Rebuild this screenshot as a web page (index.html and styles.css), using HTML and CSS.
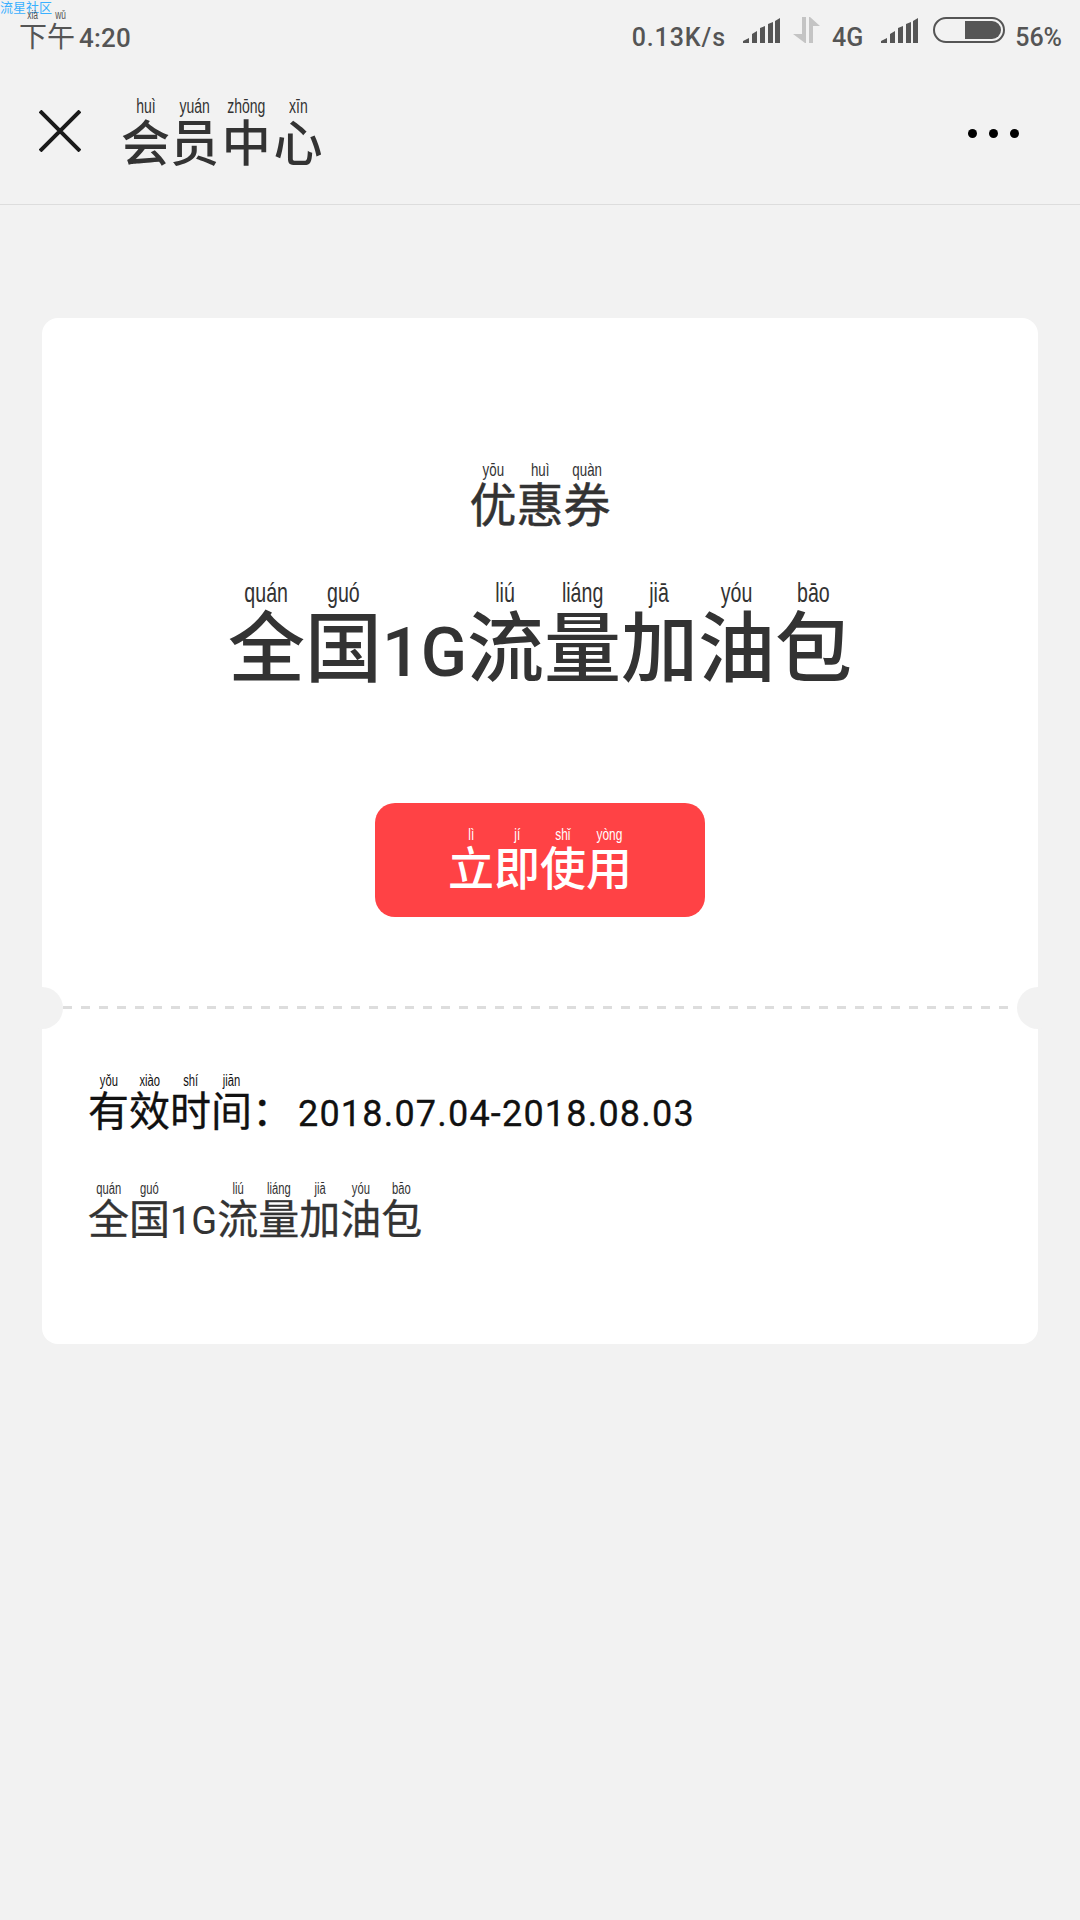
FILE: index.html
```html
<!DOCTYPE html>
<html lang="zh-CN">
<head>
    <meta charset="UTF-8">
    <meta name="viewport" content="width=device-width, initial-scale=1.0">
    <title>会员中心</title>
    <link rel="stylesheet" href="styles.css">
</head>
<body>
    <div class="watermark">流星社区</div>
    <div class="status-bar">
        <div class="time"><ruby>下<rt><span class="py">xià</span></rt></ruby><ruby>午<rt><span class="py">wǔ</span></rt></ruby><span class="time-num">4:20</span></div>
        <div class="status-right">
            <span class="speed">0.13K/s</span>
            <svg class="signal" width="37" height="25" viewBox="0 0 37 25"><path d="M0 25v-2l6-3v5zM9 25V16l5-3v12zM17 25V10l5-2v17zM25 25V6l5-2v21zM32 25V3l5-3v25z" fill="#555"/></svg>
            <svg class="arrows" width="27" height="27" viewBox="0 0 27 27"><path d="M9 0h4v26h-1L0 17h9zM16 0h1l10 9h-7v17h-4z" fill="#c4c4c4"/></svg>
            <span class="net">4G</span>
            <svg class="signal" width="37" height="25" viewBox="0 0 37 25"><path d="M0 25v-2l6-3v5zM9 25V16l5-3v12zM17 25V10l5-2v17zM25 25V6l5-2v21zM32 25V3l5-3v25z" fill="#555"/></svg>
            <div class="battery"><div class="battery-fill"></div></div>
            <span class="percent">56%</span>
        </div>
    </div>
    <div class="nav-bar">
        <svg class="close" width="42" height="42" viewBox="0 0 42 42"><path d="M1 1l40 40M41 1L1 41" stroke="#1a1a1a" stroke-width="4" fill="none"/></svg>
        <h1 class="nav-title"><ruby>会<rt><span class="py">huì</span></rt></ruby><ruby>员<rt><span class="py">yuán</span></rt></ruby><ruby>中<rt><span class="py">zhōng</span></rt></ruby><ruby>心<rt><span class="py">xīn</span></rt></ruby></h1>
        <div class="more"><i></i><i></i><i></i></div>
    </div>

    <div class="card">
        <div class="card-top">
            <div class="coupon-label"><ruby>优<rt><span class="py">yōu</span></rt></ruby><ruby>惠<rt><span class="py">huì</span></rt></ruby><ruby>券<rt><span class="py">quàn</span></rt></ruby></div>
            <div class="coupon-name"><ruby>全<rt><span class="py">quán</span></rt></ruby><ruby>国<rt><span class="py">guó</span></rt></ruby><span class="latin">1G</span><ruby>流<rt><span class="py">liú</span></rt></ruby><ruby>量<rt><span class="py">liáng</span></rt></ruby><ruby>加<rt><span class="py">jiā</span></rt></ruby><ruby>油<rt><span class="py">yóu</span></rt></ruby><ruby>包<rt><span class="py">bāo</span></rt></ruby></div>
            <button type="button" class="btn"><ruby>立<rt><span class="py">lì</span></rt></ruby><ruby>即<rt><span class="py">jí</span></rt></ruby><ruby>使<rt><span class="py">shǐ</span></rt></ruby><ruby>用<rt><span class="py">yòng</span></rt></ruby></button>
        </div>
        <div class="divider"><span class="notch notch-left"></span><span class="notch notch-right"></span></div>
        <div class="card-bottom">
            <div class="valid"><ruby>有<rt><span class="py">yǒu</span></rt></ruby><ruby>效<rt><span class="py">xiào</span></rt></ruby><ruby>时<rt><span class="py">shí</span></rt></ruby><ruby>间<rt><span class="py">jiān</span></rt></ruby>：<span class="date">2018.07.04-2018.08.03</span></div>
            <div class="scope"><ruby>全<rt><span class="py">quán</span></rt></ruby><ruby>国<rt><span class="py">guó</span></rt></ruby><span class="latin">1G</span><ruby>流<rt><span class="py">liú</span></rt></ruby><ruby>量<rt><span class="py">liáng</span></rt></ruby><ruby>加<rt><span class="py">jiā</span></rt></ruby><ruby>油<rt><span class="py">yóu</span></rt></ruby><ruby>包<rt><span class="py">bāo</span></rt></ruby></div>
        </div>
    </div>
</body>
</html>
```

FILE: styles.css
```css
body {
    font-family: "Noto Sans CJK SC", "Liberation Sans", sans-serif;
    font-weight: 500;
    margin: 0;
    padding: 0;
    height: 1920px;
    position: relative;
    overflow: hidden;
    background-color: #f2f2f2;
    color: #333;
}
rt {
    font-family: "Liberation Sans", sans-serif;
    font-weight: normal;
    text-align: center;
    -webkit-text-stroke: 0;
}
/* pinyin is narrower than any installed face */
.py {
    display: inline-block;
    transform: scaleX(0.7);
    white-space: nowrap;
}
.latin {
    font-family: Roboto, sans-serif;
    font-weight: normal;
}
.watermark {
    position: absolute;
    left: 0;
    top: 0;
    font-size: 13px;
    font-weight: normal;
    line-height: 13px;
    color: #3ab0ff;
}
.status-bar {
    display: flex;
    justify-content: space-between;
    align-items: center;
    height: 66px;
    padding: 0 18px 0 19px;
    color: #555;
}
.time {
    padding-bottom: 4px;
    font-size: 28px;
    font-weight: normal;
    line-height: 32px;
}
.time rt {
    font-size: 12px;
    line-height: 10px;
}
.time-num {
    margin-left: 4px;
    font-family: Roboto, sans-serif;
    font-size: 26px;
    font-weight: 500;
    letter-spacing: 0.2px;
}
.status-right {
    display: flex;
    align-items: center;
    padding-top: 8px;
    font-family: Roboto, sans-serif;
    font-size: 25px;
}
.speed {
    letter-spacing: 0.9px;
    margin-right: 17px;
}
.signal {
    margin-top: -14px;
}
.arrows {
    margin: -14px 12px 0 13px;
}
.net {
    margin-right: 18px;
}
.battery {
    box-sizing: border-box;
    width: 72px;
    height: 26px;
    margin: -14px 10px 0 15px;
    padding: 2px 2px 2px 30px;
    border: 2.5px solid #555;
    border-radius: 13px;
}
.battery-fill {
    height: 100%;
    background-color: #555;
    border-radius: 0 9px 9px 0;
}
.nav-bar {
    display: flex;
    align-items: center;
    box-sizing: border-box;
    height: 139px;
    padding: 0 0 8px 39px;
    border-bottom: 1px solid #ddd;
}
.close {
    flex: none;
}
.nav-title {
    flex: 1;
    margin: 0 0 0 40px;
    font-size: 49px;
    font-weight: 500;
    line-height: 56px;
}
.nav-title rt {
    font-size: 20px;
    line-height: 20px;
}
.more {
    display: flex;
    gap: 12px;
    margin: 5px 61px 0 0;
}
.more i {
    width: 9px;
    height: 9px;
    border-radius: 50%;
    background-color: #000;
}
.card {
    margin: 113px 42px 0;
    height: 1026px;
    background-color: #fff;
    border-radius: 16px;
}
.card-top {
    height: 688px;
    box-sizing: border-box;
    padding-top: 141px;
    display: flex;
    flex-direction: column;
    align-items: center;
}
.coupon-label {
    font-size: 47px;
    font-weight: normal;
    line-height: 56px;
    -webkit-text-stroke: 0.5px #333;
}
.coupon-label rt {
    font-size: 19px;
    line-height: 12px;
}
.coupon-name {
    margin-top: 47px;
    font-size: 77px;
    line-height: 88px;
}
.coupon-name rt {
    font-size: 28px;
    line-height: 28px;
}
.coupon-name .latin {
    font-size: 68px;
    font-weight: 500;
}
.btn {
    width: 330px;
    height: 114px;
    margin-top: 106px;
    padding: 0 0 5px;
    border: none;
    border-radius: 20px;
    background-color: #ff4245;
    color: #fff;
    font-family: inherit;
    font-weight: 500;
    font-size: 46px;
    line-height: 50px;
}
.btn rt {
    font-size: 17px;
    line-height: 16px;
}
.divider {
    position: relative;
    height: 3px;
    margin: 0 21px;
    background: repeating-linear-gradient(to right, #ddd 0, #ddd 9px, transparent 9px, transparent 18px);
}
.notch {
    position: absolute;
    top: -19px;
    width: 42px;
    height: 42px;
    border-radius: 50%;
    background-color: #f2f2f2;
}
.notch-left {
    left: -42px;
}
.notch-right {
    right: -42px;
}
.card-bottom {
    padding: 63px 0 0 46px;
}
.valid {
    font-size: 41px;
    font-weight: normal;
    line-height: 48px;
    color: #111;
    -webkit-text-stroke: 0.3px #111;
}
.valid rt {
    font-size: 16px;
    line-height: 16px;
}
.date {
    margin-left: 5px;
    font-family: Roboto, sans-serif;
    font-size: 36px;
    letter-spacing: 1.2px;
}
.scope {
    margin-top: 42px;
    font-size: 41px;
    font-weight: normal;
    line-height: 48px;
    -webkit-text-stroke: 0.3px #333;
}
.scope rt {
    font-size: 16px;
    line-height: 16px;
}
.scope .latin {
    font-size: 38px;
    -webkit-text-stroke: 0;
}
```
